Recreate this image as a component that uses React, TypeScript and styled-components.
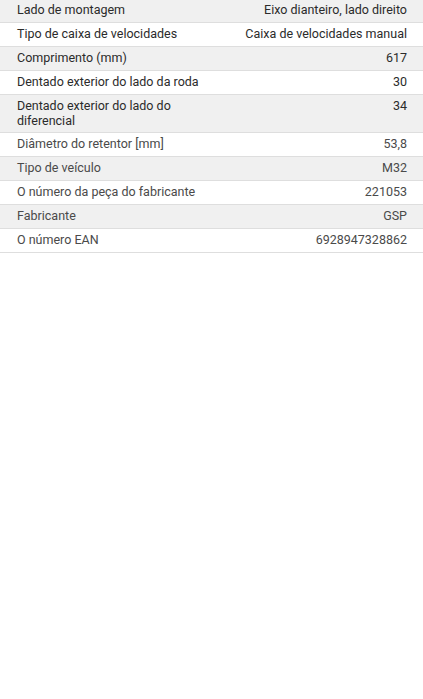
import styled, { createGlobalStyle } from 'styled-components'

const GlobalStyle = createGlobalStyle`
  body {
    margin: 0;
    background: #ffffff;
    font-family: Roboto, "Liberation Sans", sans-serif;
  }
`

// the list is scrolled a pixel, so the first row looks one pixel short
const Table = styled.div`
  display: flex;
  flex-direction: column;
  width: 100%;
  margin-top: -1px;
`

const Row = styled.div<{ $shaded: boolean; $strong: boolean }>`
  box-sizing: border-box;
  display: grid;
  grid-template-columns: 1fr auto;
  column-gap: 16px;
  align-items: start;
  min-height: 24px;
  padding: 4px 16px 4px 17px;
  background-color: ${({ $shaded }) => ($shaded ? '#f0f0f0' : '#ffffff')};
  border-bottom: 1px solid #dedede;
  font-size: 12.5px;
  line-height: 14.5px;
  color: ${({ $strong }) => ($strong ? '#2b2b2b' : '#4a4a4a')};
`

const Label = styled.span`
  max-width: 192px;
`

const Value = styled.span`
  text-align: right;
`

const specs = [
  ['Lado de montagem', 'Eixo dianteiro, lado direito'],
  ['Tipo de caixa de velocidades', 'Caixa de velocidades manual'],
  ['Comprimento (mm)', '617'],
  ['Dentado exterior do lado da roda', '30'],
  ['Dentado exterior do lado do diferencial', '34'],
  ['Diâmetro do retentor [mm]', '53,8'],
  ['Tipo de veículo', 'M32'],
  ['O número da peça do fabricante', '221053'],
  ['Fabricante', 'GSP'],
  ['O número EAN', '6928947328862'],
]

const App = () => {
  return (
    <>
      <GlobalStyle />
      <Table>
        {specs.map(([label, value], i) => (
          <Row key={label} $shaded={i % 2 === 0} $strong={i < 5}>
            <Label>{label}</Label>
            <Value>{value}</Value>
          </Row>
        ))}
      </Table>
    </>
  )
}

export default App
